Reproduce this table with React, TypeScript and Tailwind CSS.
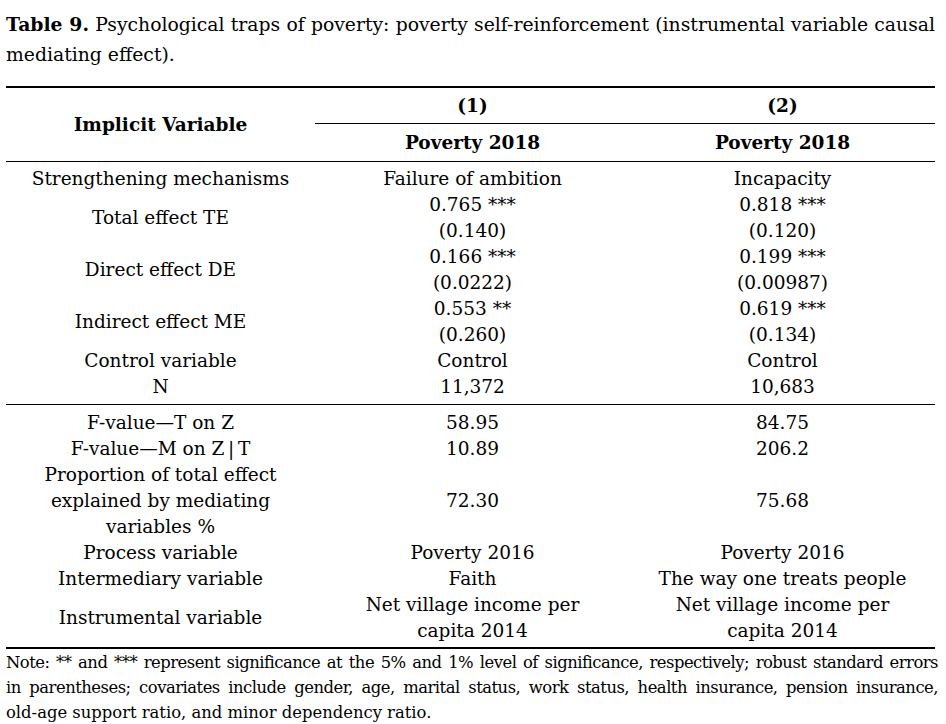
import React from "react";

type Row = { label: React.ReactNode; a: React.ReactNode[]; b: React.ReactNode[] };

const top: Row[] = [
  { label: "Strengthening mechanisms", a: ["Failure of ambition"], b: ["Incapacity"] },
  { label: "Total effect TE", a: ["0.765 ***", "(0.140)"], b: ["0.818 ***", "(0.120)"] },
  { label: "Direct effect DE", a: ["0.166 ***", "(0.0222)"], b: ["0.199 ***", "(0.00987)"] },
  { label: "Indirect effect ME", a: ["0.553 **", "(0.260)"], b: ["0.619 ***", "(0.134)"] },
  { label: "Control variable", a: ["Control"], b: ["Control"] },
  { label: "N", a: ["11,372"], b: ["10,683"] },
];

const bottom: Row[] = [
  { label: "F-value—T on Z", a: ["58.95"], b: ["84.75"] },
  { label: "F-value—M on Z\u2009|\u2009T", a: ["10.89"], b: ["206.2"] },
  {
    label: (
      <>
        Proportion of total effect
        <br />
        explained by mediating
        <br />
        variables %
      </>
    ),
    a: ["72.30"],
    b: ["75.68"],
  },
  { label: "Process variable", a: ["Poverty 2016"], b: ["Poverty 2016"] },
  { label: "Intermediary variable", a: ["Faith"], b: ["The way one treats people"] },
  {
    label: "Instrumental variable",
    a: ["Net village income per", "capita 2014"],
    b: ["Net village income per", "capita 2014"],
  },
];

function TableRow({ row }: { row: Row }) {
  return (
    <div className="grid grid-cols-[309px_315px_305px] items-center text-center">
      <div>{row.label}</div>
      <div>
        {row.a.map((t, i) => (
          <div key={i}>{t}</div>
        ))}
      </div>
      <div>
        {row.b.map((t, i) => (
          <div key={i}>{t}</div>
        ))}
      </div>
    </div>
  );
}

export default function App() {
  return (
    <div
      className="w-[946px] h-[724px] bg-white text-black overflow-hidden px-[6px]"
      style={{ fontFamily: '"DejaVu Serif", serif' }}
    >
      <div className="pt-[9px] w-[929px] text-[18.8px] leading-[30px]">
        <div className="text-justify [text-align-last:justify]">
          <span className="font-bold">Table 9.</span> Psychological traps of poverty: poverty
          self-reinforcement (instrumental variable causal
        </div>
        <div>mediating effect).</div>
      </div>

      <div className="mt-[16px] w-[929px] text-[18.5px] leading-[26px]">
        <div className="border-t-2 border-black grid grid-cols-[309px_620px]">
          <div className="row-span-2 flex items-center justify-center font-bold">
            Implicit Variable
          </div>
          <div className="grid grid-cols-[315px_305px] text-center font-bold h-[36px] items-center border-b border-black">
            <div>(1)</div>
            <div>(2)</div>
          </div>
          <div className="grid grid-cols-[315px_305px] text-center font-bold h-[37px] items-center">
            <div>Poverty 2018</div>
            <div>Poverty 2018</div>
          </div>
        </div>

        <div className="border-t-[1.5px] border-black py-[4px]">
          {top.map((r, i) => (
            <TableRow key={i} row={r} />
          ))}
        </div>

        <div className="border-t-[1.5px] border-black pt-[5px] pb-[3px]">
          {bottom.map((r, i) => (
            <TableRow key={i} row={r} />
          ))}
        </div>

        <div className="border-t-2 border-black" />
      </div>

      <div className="w-[932px] text-[16.4px] leading-[25px] pt-[1px]">
        <div className="text-justify [text-align-last:justify] tracking-[-0.5px]">
          Note: ** and *** represent significance at the 5% and 1% level of significance,
          respectively; robust standard errors
        </div>
        <div className="text-justify [text-align-last:justify] tracking-[-0.5px]">
          in parentheses; covariates include gender, age, marital status, work status, health
          insurance, pension insurance,
        </div>
        <div>old-age support ratio, and minor dependency ratio.</div>
      </div>
    </div>
  );
}
